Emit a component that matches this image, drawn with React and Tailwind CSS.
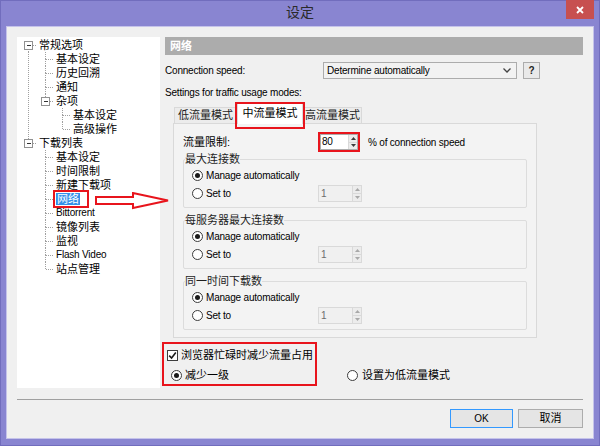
import React from 'react';

const LATIN = 'text-[10px] tracking-[-0.2px]';
const RED = 'border-[#e8141c]';

const tree = [
  { t: '常规选项', g: [], exp: true, first: true },
  { t: '基本设定', g: [1] },
  { t: '历史回溯', g: [1] },
  { t: '通知', g: [1] },
  { t: '杂项', g: [1], exp: true, last: true },
  { t: '基本设定', g: [1, 0] },
  { t: '高级操作', g: [1, 0], last: true },
  { t: '下载列表', g: [], exp: true, last: true },
  { t: '基本设定', g: [0] },
  { t: '时间限制', g: [0] },
  { t: '新建下载项', g: [0] },
  { t: '网络', g: [0], sel: true },
  { t: 'Bittorrent', g: [0], latin: true },
  { t: '镜像列表', g: [0] },
  { t: '监视', g: [0] },
  { t: 'Flash Video', g: [0], latin: true },
  { t: '站点管理', g: [0], last: true },
];

const dot = { stroke: '#a0a0a0', strokeDasharray: '1 1', shapeRendering: 'crispEdges' };

const Guide = ({ on }) => (
  <svg width="17" height="14" className="shrink-0">
    {on ? <line x1="8.5" y1="0" x2="8.5" y2="14" {...dot} /> : null}
  </svg>
);

const Connector = ({ first, last, exp }) => (
  <svg width="17" height="14" className="shrink-0">
    {!first && <line x1="8.5" y1="0" x2="8.5" y2="7" {...dot} />}
    {!last && <line x1="8.5" y1="7" x2="8.5" y2="14" {...dot} />}
    <line x1="9" y1="7.5" x2="17" y2="7.5" {...dot} />
    {exp && (
      <g shapeRendering="crispEdges">
        <rect x="4.5" y="3.5" width="8" height="8" fill="#fff" stroke="#919191" />
        <line x1="6.5" y1="7.5" x2="10.5" y2="7.5" stroke="#333" />
      </g>
    )}
  </svg>
);

const Tree = () => (
  <div className="w-[143px] shrink-0 bg-white pl-[3px] pt-[1px]">
    {tree.map((n, i) => (
      <div key={i} className="flex items-center h-[14px] leading-[14px] whitespace-nowrap text-black">
        {n.g.map((on, j) => (
          <Guide key={j} on={on} />
        ))}
        <Connector first={n.first} last={n.last} exp={n.exp} />
        {n.sel ? (
          <span className="ml-[2px] inline-block h-[12px] leading-[12px] pr-[6px] outline-2 outline-[#e8141c] outline-offset-1">
            <span className="inline-block bg-[#3390ea] text-white px-[1px]">{n.t}</span>
          </span>
        ) : (
          <span className={`ml-[2px] ${n.latin ? LATIN : ''}`}>{n.t}</span>
        )}
      </div>
    ))}
  </div>
);

const Radio = ({ on }) => (
  <span className="w-[11px] h-[11px] rounded-full border border-[#3c3c3c] bg-white flex items-center justify-center shrink-0">
    {on && <span className="w-[5px] h-[5px] rounded-full bg-[#1a1a1a]" />}
  </span>
);

const SpinArrows = ({ muted }) => {
  const c = muted ? '#a8a8a8' : '#3c3c3c';
  return (
    <div className="flex flex-col w-[9px] border-l border-[#d9d9d9]">
      <div className="flex-1 flex items-center justify-center bg-[#ececec] border-b border-[#d9d9d9]">
        <svg width="5" height="3"><path d="M0 3 L2.5 0 L5 3 Z" fill={c} /></svg>
      </div>
      <div className="flex-1 flex items-center justify-center bg-[#ececec]">
        <svg width="5" height="3"><path d="M0 0 L2.5 3 L5 0 Z" fill={c} /></svg>
      </div>
    </div>
  );
};

const Group = ({ title, top }) => (
  <fieldset className={`${top} border border-[#dcdcdc] rounded-[2px] px-[8px] pb-[5px] mx-0`}>
    <legend className="-ml-[7px] leading-[14px] text-[#1e1e1e]">{title}</legend>
    <div className="flex items-center h-[18px]">
      <Radio on />
      <span className={`ml-[3px] ${LATIN}`}>Manage automatically</span>
    </div>
    <div className="flex items-center h-[18px]">
      <div className="flex items-center w-[126px]">
        <Radio />
        <span className={`ml-[3px] ${LATIN}`}>Set to</span>
      </div>
      <div className="flex w-[44px] h-[17px] border border-[#d9d9d9] bg-[#f0f0f0]">
        <span className={`flex-1 pl-[2px] leading-[15px] text-[#6d6d6d] ${LATIN}`}>1</span>
        <SpinArrows muted />
      </div>
    </div>
  </fieldset>
);

const Tab = ({ children }) => (
  <div className="h-[16px] leading-[15px] whitespace-nowrap text-center border border-b-0 border-[#d9d9d9] bg-[#ececec] text-[#1e1e1e]">
    {children}
  </div>
);

const RightPane = () => (
  <div className="flex-1 flex flex-col">
    <div className="h-[18px] leading-[18px] bg-[#acacac] text-white font-bold pl-[5px]">网络</div>

    <div className="flex items-center mt-[7px] h-[17px]">
      <span className={`w-[158px] ${LATIN}`}>Connection speed:</span>
      <div className="w-[194px] h-[17px] flex items-center justify-between border border-[#acacac] bg-[#f2f2f2] pl-[3px] pr-[5px]">
        <span className={LATIN}>Determine automatically</span>
        <svg width="8" height="5"><polyline points="0.5,0.5 4,4 7.5,0.5" fill="none" stroke="#444" strokeWidth="1.3" /></svg>
      </div>
      <div className="ml-[6px] w-[17px] h-[17px] border border-[#acacac] bg-[#e9e9e9] flex items-center justify-center text-[10px] font-bold text-[#1e1e1e]">?</div>
    </div>

    <div className={`mt-[7px] leading-[14px] ${LATIN}`}>Settings for traffic usage modes:</div>

    <div className="ml-[9px] mt-[2px] flex items-end h-[21px]">
      <div className="w-[63px]"><Tab>低流量模式</Tab></div>
      <div className="relative w-[66px] h-[21px] -mb-[1px] z-10 bg-white border border-b-0 border-[#d9d9d9] text-center whitespace-nowrap leading-[18px]">
        中流量模式
        <span className={`absolute -left-[3px] -top-[2px] -right-[3px] -bottom-[5px] border-2 ${RED}`} />
      </div>
      <div className="w-[59px]"><Tab>高流量模式</Tab></div>
    </div>

    <div className="ml-[8px] w-[364px] h-[215px] border border-[#d9d9d9] bg-[#f3f3f3] pt-[10px] pl-[9px] pr-[9px]">
      <div className="flex items-center h-[16px]">
        <span className="w-[137px]">流量限制:</span>
        <div className="flex w-[38px] h-[16px] border border-[#acacac] bg-white outline-2 outline-[#e8141c] outline-offset-0">
          <span className={`flex-1 pl-[1px] leading-[14px] ${LATIN}`}>80</span>
          <SpinArrows />
        </div>
        <span className={`ml-[10px] ${LATIN}`}>% of connection speed</span>
      </div>
      <Group title="最大连接数" top="mt-[2px]" />
      <Group title="每服务器最大连接数" top="mt-[5px]" />
      <Group title="同一时间下载数" top="mt-[5px]" />
    </div>

    <div className="relative mt-[4px] pt-[4px] pb-[2px] flex flex-col gap-[2px]">
      <div className="flex items-center h-[18px] pl-[2px]">
        <span className="w-[11px] h-[11px] border border-[#3c3c3c] bg-white flex items-center justify-center">
          <svg width="9" height="9"><path d="M1.2 4.6 L3.6 7 L7.8 1.6" fill="none" stroke="#1a1a1a" strokeWidth="1.6" /></svg>
        </span>
        <span className="ml-[3px]">浏览器忙碌时减少流量占用</span>
      </div>
      <div className="flex items-center h-[18px] pl-[6px]">
        <div className="flex items-center w-[176px]">
          <Radio on />
          <span className="ml-[3px]">减少一级</span>
        </div>
        <Radio />
        <span className="ml-[4px]">设置为低流量模式</span>
      </div>
      <span className={`absolute -left-[3px] top-0 w-[155px] h-[44px] border-2 ${RED}`} />
    </div>
  </div>
);

export default function App() {
  return (
    <div className="w-[600px] h-[446px] flex flex-col bg-[#8985d1] border border-[#716dbd] px-[5px] pb-[6px] text-[11px] font-['Liberation_Sans','Noto_Sans_CJK_SC',sans-serif] text-black">
      <div className="relative h-[25px] shrink-0 flex items-center justify-center">
        <span className="text-[14px] text-[#2a2a2a] -mt-[2px]">设定</span>
        <div className="absolute right-0 -top-[1px] w-[28px] h-[19px] bg-[#c75050] flex items-center justify-center">
          <svg width="8" height="8"><path d="M1 1 L7 7 M7 1 L1 7" stroke="#fff" strokeWidth="1.8" /></svg>
        </div>
      </div>

      <div className="flex-1 flex flex-col border border-[#c5c3ea] bg-[#f0f0f0] px-[10px] pt-[10px]">
        <div className="relative flex gap-[5px] h-[351px]">
          <Tree />
          <RightPane />
          <svg width="76" height="18" className="absolute left-[78px] top-[155px]">
            <path d="M1 5 L38 5 L38 1 L73 8.5 L38 16 L38 12 L1 12 Z" fill="none" stroke="#e8141c" strokeWidth="2" />
          </svg>
        </div>

        <div className="mt-[11px] h-px bg-[#a0a0a0]" />

        <div className="mt-[9px] flex justify-end gap-[5px] pr-0">
          <button className="w-[63px] h-[19px] border border-[#3399ff] bg-[#e5e5e5] text-[10px]">OK</button>
          <button className="w-[65px] h-[19px] border border-[#acacac] bg-[#e5e5e5]">取消</button>
        </div>
      </div>
    </div>
  );
}
